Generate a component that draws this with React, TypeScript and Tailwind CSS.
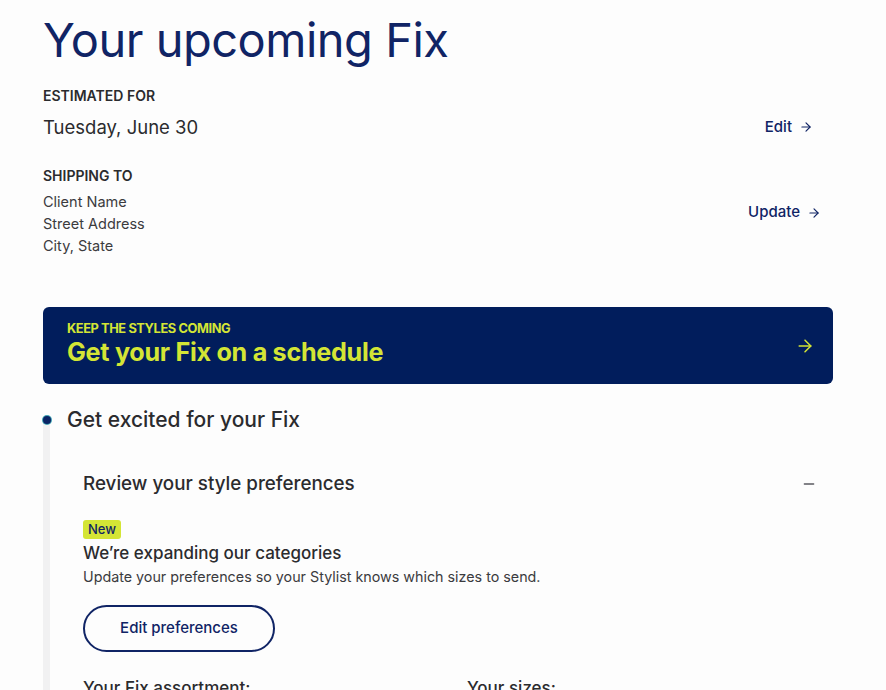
import { ArrowRight, Minus } from "lucide-react";

const font = { fontFamily: "Inter, 'Noto Sans', sans-serif" };

export default function App() {
  return (
    <main className="min-h-[690px] bg-[#fdfdfd] text-[#2b2b2e] overflow-hidden" style={font}>
      <div className="pl-[43px] pr-[53px] pt-[12px]">
        <h1 className="text-[47px] leading-[56px] font-normal tracking-[-0.5px] text-[#102465]">Your upcoming Fix</h1>

        <section className="mt-[18px]">
          <div className="text-[14px] leading-[20px] font-semibold uppercase text-[#2b2b2e]">Estimated for</div>
          <div className="flex items-center justify-between mt-[9px] pr-[20px]">
            <span className="text-[18.5px] leading-[24px] text-[#2b2b2e]">Tuesday, June 30</span>
            <a className="flex items-center gap-[7px] text-[15px] font-medium text-[#102465]">
              Edit <ArrowRight className="w-[14px] h-[14px]" strokeWidth={2} />
            </a>
          </div>
        </section>

        <section className="mt-[27px] flex items-center justify-between pr-[12px]">
          <div>
            <div className="text-[14px] leading-[20px] font-semibold uppercase text-[#2b2b2e]">Shipping to</div>
            <div className="mt-[5px] text-[14.5px] leading-[22px] text-[#3b3b3e]">
              <div>Client Name</div>
              <div>Street Address</div>
              <div>City, State</div>
            </div>
          </div>
          <a className="flex items-center gap-[7px] text-[15px] font-medium text-[#102465] mt-[2px]">
            Update <ArrowRight className="w-[14px] h-[14px]" strokeWidth={2} />
          </a>
        </section>

        <a className="mt-[50px] flex items-center justify-between h-[77px] rounded-[6px] bg-[#011d5c] pl-[24px] pr-[18px]">
          <div className="-mt-[2px]">
            <div className="text-[12.8px] leading-[15px] font-bold uppercase tracking-[-0.4px] text-[#d4e535]">Keep the styles coming</div>
            <div className="text-[25.2px] leading-[32px] font-bold tracking-[-0.3px] text-[#d4e535]">Get your Fix on a schedule</div>
          </div>
          <ArrowRight className="w-[20px] h-[20px] text-[#d4e535]" strokeWidth={1.8} />
        </a>

        <section className="mt-[22px] flex">
          <div className="relative w-[7px] shrink-0 flex flex-col items-center">
            <div className="w-[8px] h-[8px] rounded-full bg-[#0a2364] ring-1 ring-[#3fa3b3] mt-[10px] z-10" />
            <div className="w-[7px] flex-1 bg-[#f1f1f2] -mt-[2px]" />
          </div>
          <div className="flex-1 pl-[17px]">
            <h2 className="text-[21px] leading-[28px] font-medium text-[#2b2b2e]">Get excited for your Fix</h2>

            <div className="pl-[16px] mt-[38px]">
              <div className="flex items-center justify-between pr-[16px]">
                <h3 className="text-[18.8px] leading-[24px] font-medium text-[#2b2b2e]">Review your style preferences</h3>
                <Minus className="w-[16px] h-[16px] text-[#5a5a60]" strokeWidth={2} />
              </div>

              <span className="inline-block mt-[24px] rounded-[3px] bg-[#d4e535] px-[5px] text-[13px] leading-[19px] font-medium text-[#102465]">New</span>
              <div className="mt-[1px] text-[17px] leading-[24px] font-medium text-[#2b2b2e]">We’re expanding our categories</div>
              <p className="mt-[2px] text-[14.3px] leading-[20px] text-[#3b3b3e]">Update your preferences so your Stylist knows which sizes to send.</p>

              <button className="mt-[18px] w-[192px] h-[47px] rounded-full border-2 border-[#102465] text-[15px] font-medium text-[#102465]">
                Edit preferences
              </button>

              <div className="mt-[24px] grid grid-cols-[384px_1fr] text-[17px] leading-[24px] font-medium text-[#2b2b2e]">
                <div>Your Fix assortment:</div>
                <div>Your sizes:</div>
              </div>
              <div className="h-[40px]" />
            </div>
          </div>
        </section>
      </div>
    </main>
  );
}
